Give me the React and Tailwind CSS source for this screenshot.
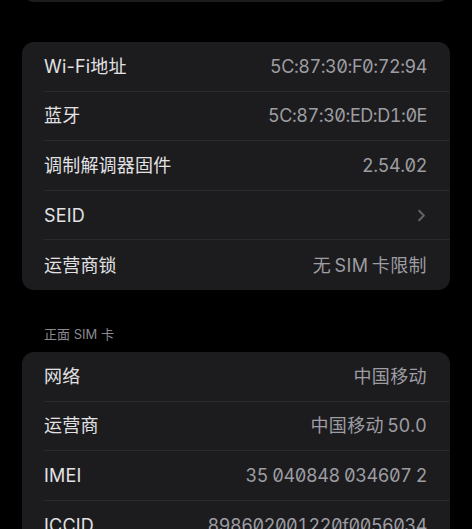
import React from 'react';
import { ChevronRight } from 'lucide-react';

const FONT = { fontFamily: 'Inter, "Noto Sans CJK SC", sans-serif' };

const network = [
  { label: 'Wi-Fi地址', value: '5C:87:30:F0:72:94', zero: true },
  { label: '蓝牙', value: '5C:87:30:ED:D1:0E', zero: true },
  { label: '调制解调器固件', value: '2.54.02', zero: true },
  { label: 'SEID', chevron: true },
  { label: '运营商锁', value: '无 SIM 卡限制' },
];

const sim = [
  { label: '网络', value: '中国移动' },
  { label: '运营商', value: '中国移动 50.0' },
  { label: 'IMEI', value: '35 040848 034607 2', zero: true },
  { label: 'ICCID', value: '898602001220f0056034', zero: true },
];

const Row = ({ row, last }) => (
  <div className="pl-[22px]">
    <div className={`flex items-center justify-between h-[49.6px] pr-[23px] ${last ? '' : 'border-b border-[#2a2a2d]'}`}>
      <span className="text-[18px] text-[#e2e2e4] tracking-[0.2px]">{row.label}</span>
      {row.chevron ? (
        <ChevronRight className="w-[19px] h-[19px] text-[#636367] -mr-[4px]" strokeWidth={2.4} />
      ) : row.zero ? (
        <span
          className="text-[18px] text-[#9d9da2] tracking-[-0.45px]"
          style={{ fontFeatureSettings: '"zero" 1, "tnum" 1' }}
        >
          {row.value}
        </span>
      ) : (
        <span className="text-[18px] text-[#9d9da2] tracking-[0.4px] [word-spacing:-2px]">{row.value}</span>
      )}
    </div>
  </div>
);

const Card = ({ rows }) => (
  <div className="mx-[22px] bg-[#1c1c1e] rounded-[12px] overflow-hidden">
    {rows.map((r, i) => (
      <Row key={r.label} row={r} last={i === rows.length - 1} />
    ))}
  </div>
);

export default function App() {
  return (
    <div className="w-[472px] h-[529px] bg-black overflow-hidden antialiased" style={FONT}>
      {/* tail of the card above */}
      <div className="mx-[22px] h-[50px] -mt-[48px] bg-[#1c1c1e] rounded-[12px]" />
      <div className="pt-[40px]">
        <Card rows={network} />
      </div>
      <div className="pl-[44px] pt-[36px] pb-[8px] h-[62px] flex items-center">
        <span className="text-[13px] text-[#8a8a8e]">正面 SIM 卡</span>
      </div>
      <Card rows={sim} />
    </div>
  );
}
